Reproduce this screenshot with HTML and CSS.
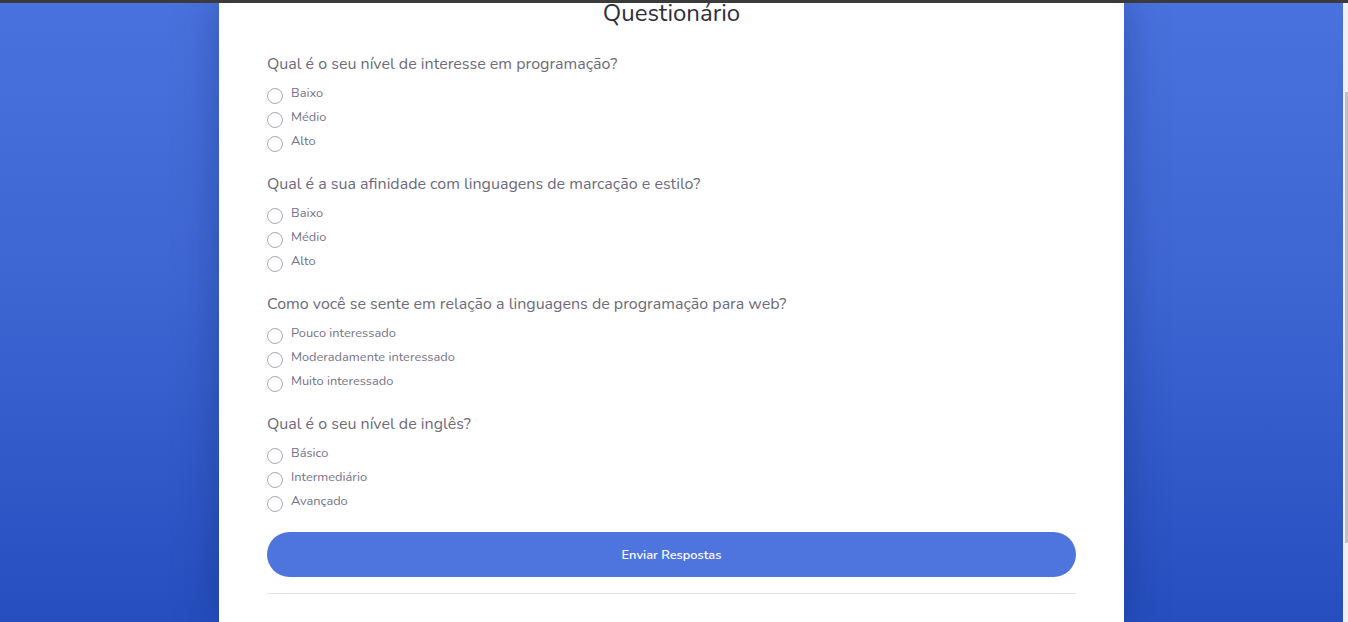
FILE: index.html
```html
<!DOCTYPE html>
<html lang="pt-BR">
<head>
<meta charset="utf-8">
<title>Questionário</title>
<link rel="stylesheet" href="styles.css">
</head>
<body>
<div class="topbar"></div>
<div class="scrollbar"><div class="thumb"></div></div>
<main class="page">
  <section class="card">
    <h1 class="title">Questionário</h1>
    <form class="form">
      <div class="question">
        <p class="q-title">Qual é o seu nível de interesse em programação?</p>
        <label class="option"><input type="radio" name="q1"><span>Baixo</span></label>
        <label class="option"><input type="radio" name="q1"><span>Médio</span></label>
        <label class="option"><input type="radio" name="q1"><span>Alto</span></label>
      </div>
      <div class="question">
        <p class="q-title">Qual é a sua afinidade com linguagens de marcação e estilo?</p>
        <label class="option"><input type="radio" name="q2"><span>Baixo</span></label>
        <label class="option"><input type="radio" name="q2"><span>Médio</span></label>
        <label class="option"><input type="radio" name="q2"><span>Alto</span></label>
      </div>
      <div class="question">
        <p class="q-title">Como você se sente em relação a linguagens de programação para web?</p>
        <label class="option"><input type="radio" name="q3"><span>Pouco interessado</span></label>
        <label class="option"><input type="radio" name="q3"><span>Moderadamente interessado</span></label>
        <label class="option"><input type="radio" name="q3"><span>Muito interessado</span></label>
      </div>
      <div class="question">
        <p class="q-title">Qual é o seu nível de inglês?</p>
        <label class="option"><input type="radio" name="q4"><span>Básico</span></label>
        <label class="option"><input type="radio" name="q4"><span>Intermediário</span></label>
        <label class="option"><input type="radio" name="q4"><span>Avançado</span></label>
      </div>
      <button type="button" class="submit">Enviar Respostas</button>
      <hr class="divider">
    </form>
  </section>
</main>
</body>
</html>
```

FILE: styles.css
```css
html, body {
  margin: 0;
  padding: 0;
  height: 622px;
  overflow: hidden;
}
body {
  font-family: "Nunito", Lato, "Open Sans", sans-serif;
  background: linear-gradient(180deg, #4a72de 0%, #3e66d3 45%, #264ebf 100%);
}
.topbar {
  position: fixed;
  top: 0;
  left: 0;
  right: 0;
  height: 3px;
  background: #3b3b3b;
  z-index: 10;
}
.scrollbar {
  position: fixed;
  top: 3px;
  right: 0;
  bottom: 0;
  width: 5px;
  background: #f1f1f1;
  z-index: 9;
}
.thumb {
  position: absolute;
  right: 0;
  top: 89px;
  width: 3px;
  height: 451px;
  background: #c1c1c1;
}
.page {
  width: calc(100% - 5px);
  height: 622px;
  display: flex;
  justify-content: center;
}
.card {
  width: 905px;
  box-sizing: border-box;
  height: 622px;
  background: #fff;
  padding: 0 48px;
  box-shadow: 0 0 40px rgba(10, 30, 90, 0.35);
}
.title {
  margin: 0;
  font-size: 24px;
  line-height: 27px;
  font-weight: 400;
  color: #2f2f3a;
  text-align: center;
}
.form {
  display: flex;
  flex-direction: column;
  margin-top: 27px;
}
.question {
  display: flex;
  flex-direction: column;
  margin-bottom: 21px;
}
.q-title {
  margin: 0 0 7px;
  font-size: 16px;
  line-height: 20px;
  color: #6d6b7b;
}
.option {
  display: flex;
  align-items: center;
  height: 24px;
  font-size: 12.8px;
  color: #74728a;
}
.option input {
  appearance: none;
  -webkit-appearance: none;
  flex: none;
  width: 16px;
  height: 16px;
  margin: 5px 8px 0 0;
  border: 1px solid #a9a8b6;
  border-radius: 50%;
  background: #fff;
  box-sizing: border-box;
}
.question:last-of-type {
  margin-bottom: 19px;
}
.submit {
  height: 45px;
  border: none;
  border-radius: 23px;
  background: #4e75dd;
  color: #fff;
  font-family: inherit;
  font-size: 12.8px;
  font-weight: 600;
}
.divider {
  margin: 16px 0 0;
  border: none;
  border-top: 1px solid #e2e2e6;
}
```
